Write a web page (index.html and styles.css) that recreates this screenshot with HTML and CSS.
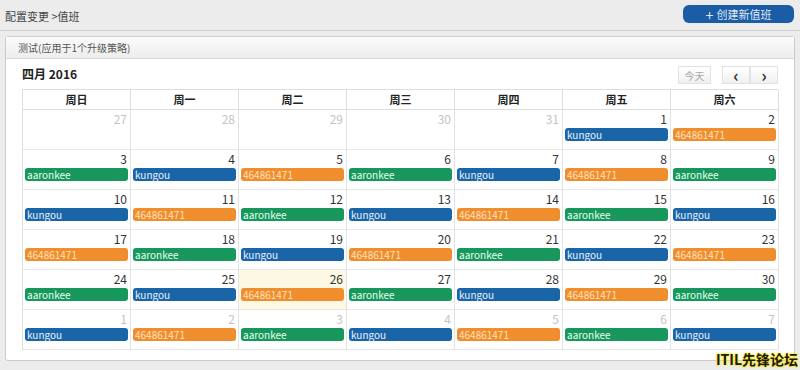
FILE: index.html
```html
<html>
	<head>
		<link rel="stylesheet" href="styles.css">
	</head>
	<body>
		<div class="topbar">
			<span class="crumb">配置变更 &gt;值班</span>
			<button class="create"><span class="plus">+</span> 创建新值班</button>
		</div>
		<div class="panel">
			<div class="panel_head">测试(应用于1个升级策略)</div>
			<div class="panel_body">
				<div class="cal_title">
					<h2>四月 2016</h2>
					<div class="cal_tools">
						<button class="today">今天</button>
						<div class="nav">
							<button>&lsaquo;</button>
							<button>&rsaquo;</button>
						</div>
					</div>
				</div>
				<div class="calendar">
					<div class="dow">周日</div>
					<div class="dow">周一</div>
					<div class="dow">周二</div>
					<div class="dow">周三</div>
					<div class="dow">周四</div>
					<div class="dow">周五</div>
					<div class="dow">周六</div>
				</div>
			</div>
		</div>
		<div class="mark">ITIL先锋论坛</div>

		<script>
			const cal = document.querySelector('.calendar');
			const duty = ['green', 'blue', 'orange'];
			const names = { green: 'aaronkee', blue: 'kungou', orange: '464861471' };

			function addDay(num, other, event, today) {
				const cell = document.createElement('div');
				cell.className = 'day' + (other ? ' other' : '') + (today ? ' today' : '');
				cell.innerHTML = '<span class="num">' + num + '</span>';
				if (event) {
					cell.innerHTML += '<div class="event ' + event + '">' + names[event] + '</div>';
				}
				cal.appendChild(cell);
			}

			[27, 28, 29, 30, 31].forEach(n => addDay(n, true));
			for (let n = 1; n <= 30; n++) {
				addDay(n, false, duty[n % 3], n === 26);
			}
			for (let n = 1; n <= 7; n++) {
				addDay(n, true, duty[n % 3]);
			}
		</script>
	</body>
</html>
```

FILE: styles.css
```css
* {
	margin: 0;
	padding: 0;
	box-sizing: border-box;
}

body {
	width: 800px;
	height: 370px;
	background: #ececec;
	font-family: "Noto Sans CJK SC", "Noto Sans", sans-serif;
	font-size: 11px;
	color: #333;
	overflow: hidden;
	position: relative;
}

.topbar {
	height: 31px;
	display: flex;
	align-items: center;
	justify-content: space-between;
	padding: 0 6px 0 5px;
	border-bottom: 1px solid #cfcfcf;
}

.crumb {
	font-size: 11px;
	color: #444;
	margin-top: 2px;
}

.create {
	width: 111px;
	height: 18px;
	margin-top: -2px;
	background: #1a5ca6;
	border: none;
	border-radius: 6px;
	color: #dfe9f5;
	font-family: inherit;
	font-size: 11px;
	display: flex;
	align-items: center;
	justify-content: center;
	gap: 3px;
}

.create .plus {
	font-size: 15px;
	line-height: 1;
	color: #fff;
	font-weight: 300;
}

.panel {
	margin: 5px 5px 0;
	height: 325px;
	background: #fff;
	border: 1px solid #cbcbcb;
	border-radius: 3px;
}

.panel_head {
	height: 22px;
	line-height: 22px;
	padding-left: 12px;
	font-size: 10px;
	color: #555;
	background: linear-gradient(180deg, #fbfbfb, #ededed);
	border-bottom: 1px solid #d8d8d8;
}

.panel_body {
	padding: 0 16px 0 16px;
}

.cal_title {
	height: 30px;
	display: flex;
	align-items: center;
	justify-content: space-between;
}

.cal_title h2 {
	font-size: 12px;
	font-weight: bold;
	color: #222;
	margin-top: -1px;
}

.cal_tools {
	display: flex;
	gap: 11px;
	margin-top: 2px;
}

.cal_tools button {
	height: 18px;
	background: linear-gradient(180deg, #fff, #f0f0f0);
	border: 1px solid #e2e2e2;
	font-family: inherit;
	color: #333;
}

.cal_tools .today {
	width: 33px;
	font-size: 10px;
	color: #aaa;
}

.nav {
	display: flex;
}

.nav button {
	width: 28px;
	font-size: 17px;
	line-height: 14px;
	font-weight: bold;
}

.calendar {
	display: grid;
	grid-template-columns: repeat(7, 108px);
	grid-template-rows: 20px repeat(6, 40px);
	border-left: 1px solid #dedede;
	border-top: 1px solid #dedede;
}

.calendar .dow {
	line-height: 19px;
	text-align: center;
	font-weight: bold;
	font-size: 11px;
	color: #222;
	border-right: 1px solid #dedede;
	border-bottom: 1px solid #dedede;
}

.day {
	border-right: 1px solid #e2e2e2;
	border-bottom: 1px solid #e8e8e8;
	padding: 2px 2px 0;
	display: flex;
	flex-direction: column;
}

.day .num {
	align-self: flex-end;
	font-size: 12px;
	line-height: 14px;
	padding-right: 1px;
	color: #333;
}

.day.other .num {
	color: #c4c4c4;
}

.day.today {
	background: #fcf8e3;
}

.event {
	margin-top: 2px;
	height: 13px;
	line-height: 13px;
	padding-left: 2px;
	border-radius: 3px;
	font-size: 10px;
	color: #fff;
}

.event.green {
	background: #17975b;
	color: #e6fff0;
}

.event.blue {
	background: #1a65a8;
	color: #e8f2ff;
}

.event.orange {
	background: #f08d2c;
	color: #fde2c0;
}

.mark {
	position: absolute;
	right: 2px;
	bottom: 1px;
	font-size: 14px;
	font-weight: bold;
	color: #1a1a1a;
	text-shadow: 0 0 2px #ffe600, 0 0 2px #ffe600, 0 0 3px #fff36a;
}
```
